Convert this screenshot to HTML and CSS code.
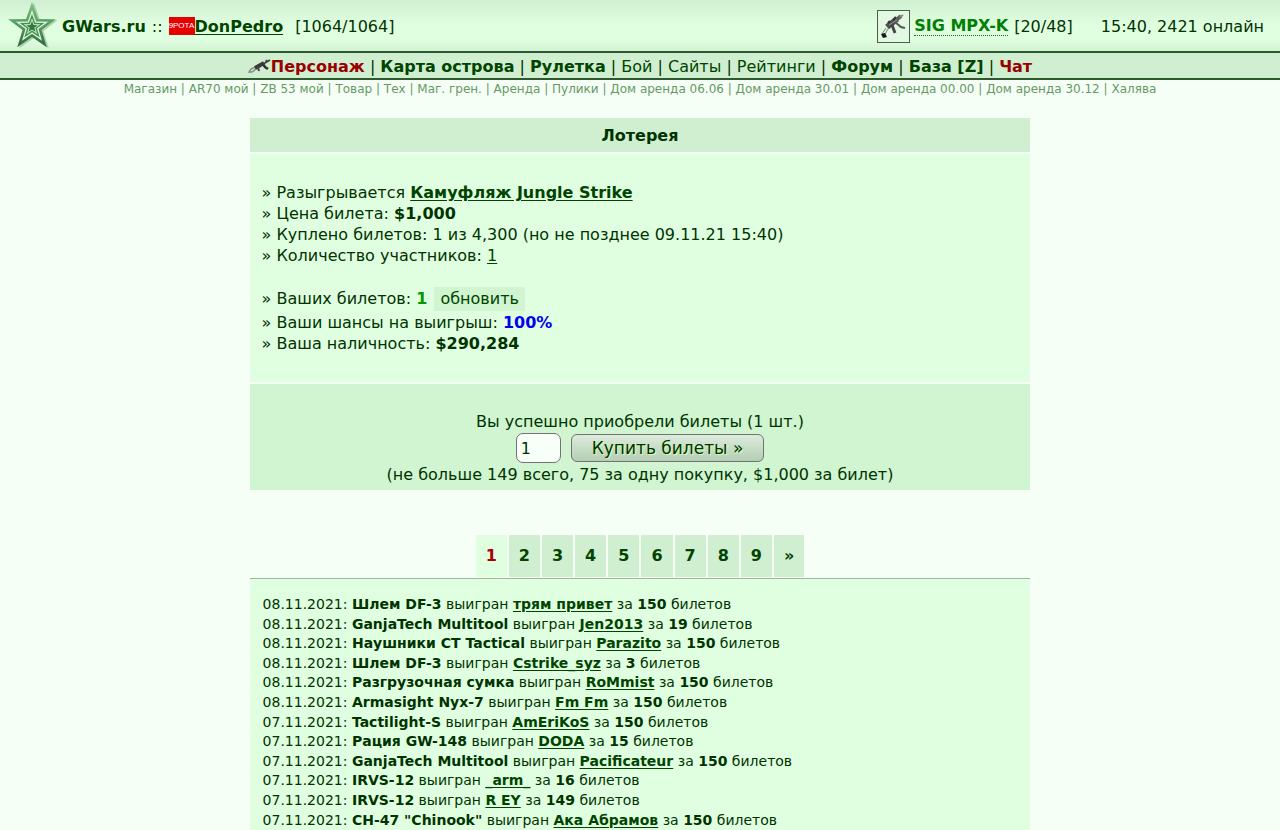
FILE: index.html
```html
<!DOCTYPE html>
<html lang="ru">
<head>
    <meta charset="UTF-8">
    <meta name="viewport" content="width=device-width, initial-scale=1.0">
    <title>Лотерея - GWars.ru</title>
    <link rel="stylesheet" href="styles.css">
</head>
<body>
    <header class="topbar">
        <div class="user">
            <svg class="star" viewBox="0 0 50 50" aria-hidden="true">
                <defs>
                    <linearGradient id="starFill" x1="0" y1="0" x2="0" y2="1">
                        <stop offset="0" stop-color="#78c582"/>
                        <stop offset="0.5" stop-color="#559c60"/>
                        <stop offset="1" stop-color="#33683a"/>
                    </linearGradient>
                    <path id="fivePoint" d="M0 -100 L24 -32 L95 -31 L38 12 L59 81 L0 40 L-59 81 L-38 12 L-95 -31 L-24 -32 Z"/>
                </defs>
                <use href="#fivePoint" transform="translate(26 27) scale(0.25)" fill="#7da582" opacity="0.5"/>
                <use href="#fivePoint" transform="translate(24 26) scale(0.25)" fill="url(#starFill)"/>
                <use href="#fivePoint" transform="translate(24 26) scale(0.17)" fill="#daf5dc"/>
                <use href="#fivePoint" transform="translate(24 26) scale(0.13)" fill="#478d52"/>
                <use href="#fivePoint" transform="translate(24 26) scale(0.09)" fill="#bfe3c3"/>
                <use href="#fivePoint" transform="translate(24 26) scale(0.06)" fill="#2f7a3b"/>
            </svg>
            <a class="site" href="#">GWars.ru</a>
            <span class="colons">::</span>
            <span class="clan">9РОТА</span><a class="name" href="#">DonPedro</a>
            <span class="health">[1064/1064]</span>
        </div>
        <div class="status">
            <svg class="weapon" viewBox="0 0 33 33" aria-hidden="true">
                <rect x="0.5" y="0.5" width="32" height="32" fill="#e3f8e3" stroke="#4a604a"/>
                <path d="M10 17 L20 9" stroke="#4d504e" stroke-width="6"/>
                <path d="M18 11 L24 6" stroke="#5d625e" stroke-width="4"/>
                <path d="M23 7 L26 5" stroke="#888" stroke-width="2"/>
                <path d="M18 12 L24 17 L28 18" stroke="#555a56" stroke-width="2" fill="none"/>
                <path d="M15 15 L18 23" stroke="#444" stroke-width="3"/>
                <path d="M11 13 L13 11 M16 10 L19 7" stroke="#333" stroke-width="2"/>
                <path d="M12 15 L20 10" stroke="#8d948e" stroke-width="1"/>
                <path d="M9 18 L5 24 M11 19 L8 24" stroke="#777d78" stroke-width="1"/>
                <path d="M4 24 L8 23 L10 27 L6 28 Z" fill="#181818"/>
            </svg>
            <a class="gun" href="#">SIG MPX-K</a>
            <span>[20/48]</span>
            <span class="online">15:40, 2421 онлайн</span>
        </div>
    </header>

    <nav class="menu">
        <svg class="rifle" viewBox="0 0 23 15" aria-hidden="true">
            <path d="M8 8 L3 10 L1 13 L4 13 L8 10" fill="none" stroke="#858b85" stroke-width="1.5"/>
            <path d="M7 9 L16 4" stroke="#3a3a3a" stroke-width="4"/>
            <path d="M15 5 L22 1" stroke="#444" stroke-width="2"/>
            <path d="M15 5 L17 8 L20 10" stroke="#333" stroke-width="2.5" fill="none"/>
            <path d="M10 8 L11 12 M19 3 L18 1" stroke="#444" stroke-width="2"/>
        </svg><a class="red" href="#">Персонаж</a> |
        <a class="main" href="#">Карта острова</a> |
        <a class="main" href="#">Рулетка</a> |
        <a href="#">Бой</a> |
        <a href="#">Сайты</a> |
        <a href="#">Рейтинги</a> |
        <a class="main" href="#">Форум</a> |
        <a class="main" href="#">База [Z]</a> |
        <a class="red" href="#">Чат</a>
    </nav>

    <nav class="quick">
        <a href="#">Магазин</a> |
        <a href="#">AR70 мой</a> |
        <a href="#">ZB 53 мой</a> |
        <a href="#">Товар</a> |
        <a href="#">Тех</a> |
        <a href="#">Маг. грен.</a> |
        <a href="#">Аренда</a> |
        <a href="#">Пулики</a> |
        <a href="#">Дом аренда 06.06</a> |
        <a href="#">Дом аренда 30.01</a> |
        <a href="#">Дом аренда 00.00</a> |
        <a href="#">Дом аренда 30.12</a> |
        <a href="#">Халява</a>
    </nav>

    <main class="content">
        <section class="lottery">
            <h1>Лотерея</h1>
            <div class="info">
                <div>» Разыгрывается <a class="item" href="#">Камуфляж Jungle Strike</a></div>
                <div>» Цена билета: <b>$1,000</b></div>
                <div>» Куплено билетов: 1 из 4,300 (но не позднее 09.11.21 15:40)</div>
                <div>» Количество участников: <a href="#">1</a></div>
                <div class="mine">» Ваших билетов: <b class="count">1</b> <button class="refresh" type="button">обновить</button></div>
                <div>» Ваши шансы на выигрыш: <b class="chance">100%</b></div>
                <div>» Ваша наличность: <b>$290,284</b></div>
            </div>
            <form class="buy">
                <label for="tickets">Вы успешно приобрели билеты (1 шт.)</label>
                <div class="fields">
                    <input type="text" id="tickets" value="1">
                    <button type="button">Купить билеты »</button>
                </div>
                <div>(не больше 149 всего, 75 за одну покупку, $1,000 за билет)</div>
            </form>
        </section>

        <nav class="pages">
            <a class="current" href="#">1</a>
            <a href="#">2</a>
            <a href="#">3</a>
            <a href="#">4</a>
            <a href="#">5</a>
            <a href="#">6</a>
            <a href="#">7</a>
            <a href="#">8</a>
            <a href="#">9</a>
            <a href="#">»</a>
        </nav>

        <section class="winners">
            <div>08.11.2021: <b>Шлем DF-3</b> выигран <a href="#">трям привет</a> за <b>150</b> билетов</div>
            <div>08.11.2021: <b>GanjaTech Multitool</b> выигран <a href="#">Jen2013</a> за <b>19</b> билетов</div>
            <div>08.11.2021: <b>Наушники CT Tactical</b> выигран <a href="#">Parazito</a> за <b>150</b> билетов</div>
            <div>08.11.2021: <b>Шлем DF-3</b> выигран <a href="#">Cstrike_syz</a> за <b>3</b> билетов</div>
            <div>08.11.2021: <b>Разгрузочная сумка</b> выигран <a href="#">RoMmist</a> за <b>150</b> билетов</div>
            <div>08.11.2021: <b>Armasight Nyx-7</b> выигран <a href="#">Fm Fm</a> за <b>150</b> билетов</div>
            <div>07.11.2021: <b>Tactilight-S</b> выигран <a href="#">AmEriKoS</a> за <b>150</b> билетов</div>
            <div>07.11.2021: <b>Рация GW-148</b> выигран <a href="#">DODA</a> за <b>15</b> билетов</div>
            <div>07.11.2021: <b>GanjaTech Multitool</b> выигран <a href="#">Pacificateur</a> за <b>150</b> билетов</div>
            <div>07.11.2021: <b>IRVS-12</b> выигран <a href="#">_arm_</a> за <b>16</b> билетов</div>
            <div>07.11.2021: <b>IRVS-12</b> выигран <a href="#">R EY</a> за <b>149</b> билетов</div>
            <div>07.11.2021: <b>CH-47 "Chinook"</b> выигран <a href="#">Ака Абрамов</a> за <b>150</b> билетов</div>
        </section>
    </main>
</body>
</html>
```
FILE: styles.css
```css
* { box-sizing: border-box; }
body { margin: 0; background: #f5fff5; color: #003300; font: 16px/21px Verdana, "DejaVu Sans", sans-serif; overflow-x: hidden; }
a { color: #004400; text-underline-offset: 2px; }

.topbar { display: flex; justify-content: space-between; align-items: center; height: 53px; padding: 1px 16px 0 8px; background: linear-gradient(#d0eed0, #e0ffe0 50%, #e0ffe0 75%, #d4f2d4); border-bottom: 2px solid #2c5a2c; white-space: nowrap; }
.user, .status { display: flex; align-items: center; }
.star { width: 50px; height: 50px; margin-right: 4px; }
.site { font-weight: bold; text-decoration: none; }
.colons { margin: 0 6px; }
.clan { width: 26px; height: 18px; background: #e60000; color: #fff; font: 8px/18px "Liberation Sans", Arial, sans-serif; text-align: center; }
.name { font-weight: bold; }
.health { margin-left: 12px; }
.weapon { width: 33px; height: 33px; margin-right: 4px; }
.gun { margin-right: 6px; color: #008000; font-weight: bold; line-height: 19px; text-decoration: none; border-bottom: 1px dotted #008000; }
.online { margin-left: 28px; }

.menu { height: 27px; line-height: 28px; background: #d0eed0; border-bottom: 2px solid #2c5a2c; text-align: center; }
.menu a { text-decoration: none; }
.menu .main { font-weight: bold; }
.menu .red { color: #990000; font-weight: bold; }
.rifle { width: 23px; height: 15px; vertical-align: -2px; }

.quick { font-size: 12px; line-height: 19px; text-align: center; color: #669966; }
.quick a { color: #669966; text-decoration: none; }

.content { width: 61%; margin: 19px auto 0; }
.lottery { display: grid; gap: 2px; }
.lottery h1 { margin: 0; background: #d0eed0; font-size: 16px; line-height: 34px; padding-top: 1px; height: 34px; text-align: center; }
.info { padding: 28px 12px; background: #e0ffe0; }
.info .item { font-weight: bold; }
.mine { margin-top: 20px; line-height: 26px; }
.count { color: #009900; }
.chance { color: #0000ee; }
.refresh { margin-left: 2px; padding: 0 6px; height: 24px; border: 0; background: #d0f5d0; color: #004400; font: inherit; line-height: 24px; }
.buy { padding: 27px 12px 5px; background: #d0f5d0; text-align: center; }
.fields { display: flex; justify-content: center; align-items: center; gap: 10px; height: 32px; }
.fields input { width: 45px; height: 30px; padding: 0 4px; border: 1px solid #777077; border-radius: 7px; background: #f8fff8; color: #003300; font: inherit; }
.fields button { height: 28px; padding: 0 20px; border: 1px solid #777077; border-radius: 6px; background: linear-gradient(#dcecdc, #b4ceb4); color: #003300; font: inherit; text-shadow: 1px 1px 0 #d4ffb0; font-size: 17px; }

.pages { display: flex; justify-content: center; gap: 2px; margin-top: 45px; padding-bottom: 1px; border-bottom: 1px solid #99bb99; }
.pages a { padding: 0 10px; background: #d0eed0; line-height: 42px; font-weight: bold; text-decoration: none; }
.pages .current { background: #e0ffe0; color: #aa0000; }

.winners { padding: 16px 13px; background: #e0ffe0; font-size: 14px; line-height: 1.4; }
.winners a { font-weight: bold; }
```
